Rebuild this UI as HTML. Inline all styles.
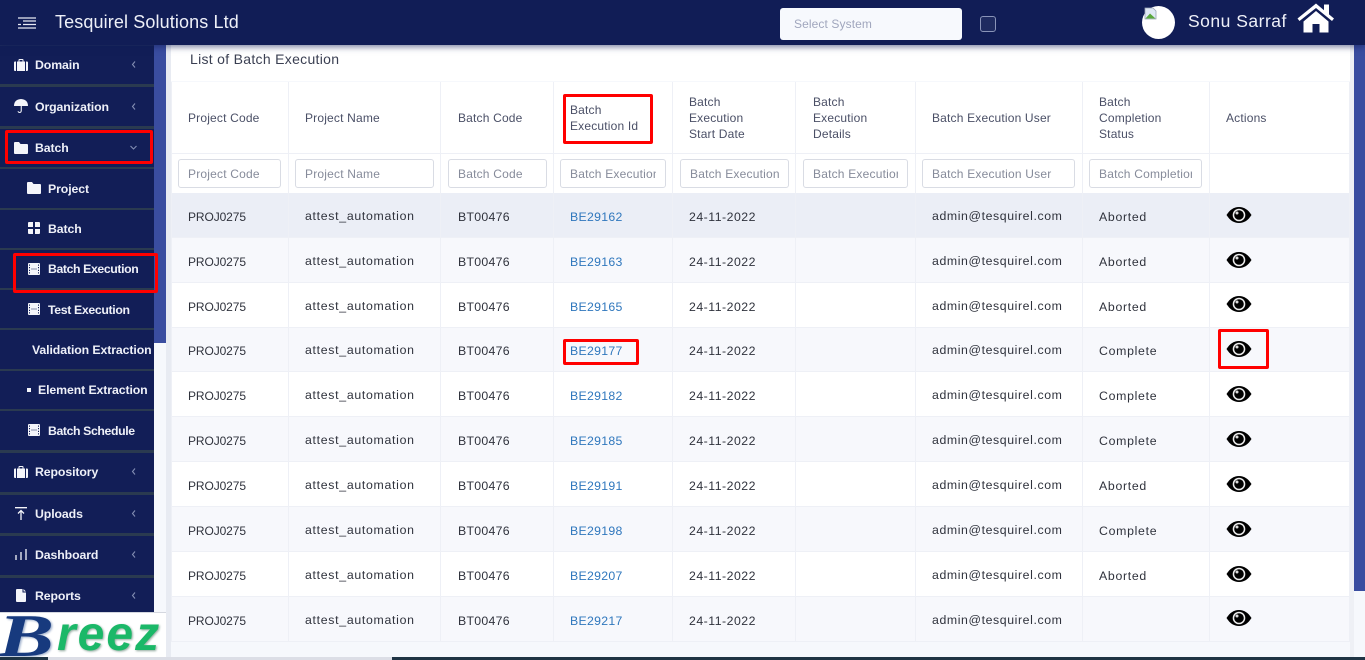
<!DOCTYPE html>
<html><head><meta charset="utf-8"><title>Batch Execution</title>
<style>
html,body{margin:0;padding:0;width:1365px;height:660px;overflow:hidden;background:#f6f8fc;font-family:"Liberation Sans",sans-serif}
div,span,svg,input{position:absolute;box-sizing:border-box}
.top{left:0;top:0;width:1365px;height:45px;background:#111d56;z-index:5;box-shadow:0 2px 6px rgba(17,29,86,.55)}
.side{left:0;top:45px;width:154px;height:568px;background:#121e57;z-index:3}
.dv{left:0;width:154px;height:3px;background:#2a3a50}
.m{color:#eef0f8;font-weight:bold;font-size:12.3px;line-height:16px;white-space:nowrap;letter-spacing:-.1px}
.ch{left:130px;width:7px;height:9px}
.i{fill:#f4f5fa}
.col{background:#eef0f6;width:1px;top:82px;height:560px}
.th{color:#4a4f66;font-size:12px;line-height:16px;white-space:nowrap;letter-spacing:.18px}
.f{top:159px;height:29px;border:1px solid #d9dce4;border-radius:3px;background:#fff;color:#868b9a;font:12px "Liberation Sans",sans-serif;letter-spacing:.2px;padding:0 9px;outline:none}
.f::placeholder{color:#868b9a;opacity:1}
.r{left:171px;width:1179px;height:45px;border-bottom:1px solid #eef0f6}
.alt{background:#f7f8fc}
.r span{top:16px;font-size:12.3px;line-height:16px;color:#2f323c;white-space:nowrap;letter-spacing:.28px}
.r.s span{top:15px}
.r span.c1{left:17px;font-size:12px;letter-spacing:-.1px}
.r span.c2{left:134px;margin-top:-1px;letter-spacing:.7px}
.r span.c3{left:287px}
.r span.c4{left:399px;color:#2f77bd}
.r span.c5{left:518px;letter-spacing:.5px}
.r span.c7{left:761px;margin-top:-1px;letter-spacing:.6px}
.r span.c8{left:928px;letter-spacing:.7px}
.r svg{left:1055px;top:13px;width:26px;height:18px}
.red{border:3px solid #f00;border-radius:2px;z-index:6}
</style></head><body>
<svg width="0" height="0" style="left:0;top:0">
<defs>
<symbol id="eye" viewBox="0 0 26 18"><path d="M0.500 9C4 3.500 8 1 13 1s9 2.500 12.500 8C22 14.500 18 17 13 17S4 14.500 0.500 9z"/><circle cx="13" cy="9" r="6.300" fill="#eee"/><circle cx="13" cy="9" r="4.800"/><circle cx="11" cy="7" r="1.500" fill="#ddd"/></symbol>
<symbol id="film" viewBox="0 0 12 12"><path class="i" fill-rule="evenodd" d="M1 0h10q1 0 1 1v10q0 1-1 1H1q-1 0-1-1V1q0-1 1-1zM1 1.500v1.200h1V1.500zM10 1.500v1.200h1V1.500zM1 4v1.200h1V4zM10 4v1.200h1V4zM1 6.800V8h1V6.800zM10 6.800V8h1V6.800zM1 9.300v1.200h1V9.300zM10 9.300v1.200h1V9.300zM3 5.700v.6h6v-.6z"/></symbol>
<symbol id="case" viewBox="0 0 14 12"><path class="i" d="M0 3.500q0-1 1-1h1V12H1q-1 0-1-1zM3 2.500h1.500V1q0-1 1-1h3q1 0 1 1v1.500H11V12H3zM5.500 1v1.500h3V1zM12 2.500h1q1 0 1 1V11q0 1-1 1h-1z"/></symbol>
<symbol id="fold" viewBox="0 0 14 12"><path class="i" d="M1 0h4l1.500 2H13q1 0 1 1v8q0 1-1 1H1q-1 0-1-1V1q0-1 1-1z"/></symbol>
<symbol id="cv" viewBox="0 0 7 9"><path d="M5 1.500L2.500 4.500 5 7.500" fill="none" stroke="#838eb3" stroke-width="1.100"/></symbol>
</defs></svg>

<div style="left:166px;top:45px;width:5px;height:612px;background:#e8ebf2"></div>
<div style="left:171px;top:45px;width:1179px;height:36px;background:#fff"></div>
<div style="left:171px;top:82px;width:1179px;height:111px;background:#fff"></div>
<div style="left:171px;top:153px;width:1179px;height:1px;background:#eef0f6"></div>
<div style="left:1350px;top:45px;width:4px;height:612px;background:#eef0f5"></div>
<div style="left:154px;top:45px;width:12px;height:298px;background:#3a4da0"></div>
<div style="left:1354px;top:45px;width:11px;height:546px;background:#3a4da0"></div>
<div style="left:190px;top:50px;font-size:14px;line-height:18px;color:#3a3f52;letter-spacing:.3px;white-space:nowrap">List of Batch Execution</div>

<div class="r" style="top:193px;background:#ebeef6"><span class="c1">PROJ0275</span><span class="c2">attest_automation</span><span class="c3">BT00476</span><span class="c4">BE29162</span><span class="c5">24-11-2022</span><span class="c7">admin@tesquirel.com</span><span class="c8">Aborted</span><svg><use href="#eye"/></svg></div>
<div class="r alt" style="top:238px"><span class="c1">PROJ0275</span><span class="c2">attest_automation</span><span class="c3">BT00476</span><span class="c4">BE29163</span><span class="c5">24-11-2022</span><span class="c7">admin@tesquirel.com</span><span class="c8">Aborted</span><svg><use href="#eye"/></svg></div>
<div class="r" style="top:283px;background:#fff"><span class="c1">PROJ0275</span><span class="c2">attest_automation</span><span class="c3">BT00476</span><span class="c4">BE29165</span><span class="c5">24-11-2022</span><span class="c7">admin@tesquirel.com</span><span class="c8">Aborted</span><svg style="top:12px"><use href="#eye"/></svg></div>
<div class="r alt s" style="top:328px;height:44px"><span class="c1">PROJ0275</span><span class="c2">attest_automation</span><span class="c3">BT00476</span><span class="c4">BE29177</span><span class="c5">24-11-2022</span><span class="c7">admin@tesquirel.com</span><span class="c8">Complete</span><svg style="top:12px"><use href="#eye"/></svg></div>
<div class="r" style="top:372px;background:#fff"><span class="c1">PROJ0275</span><span class="c2">attest_automation</span><span class="c3">BT00476</span><span class="c4">BE29182</span><span class="c5">24-11-2022</span><span class="c7">admin@tesquirel.com</span><span class="c8">Complete</span><svg><use href="#eye"/></svg></div>
<div class="r alt" style="top:417px"><span class="c1">PROJ0275</span><span class="c2">attest_automation</span><span class="c3">BT00476</span><span class="c4">BE29185</span><span class="c5">24-11-2022</span><span class="c7">admin@tesquirel.com</span><span class="c8">Complete</span><svg><use href="#eye"/></svg></div>
<div class="r" style="top:462px;background:#fff"><span class="c1">PROJ0275</span><span class="c2">attest_automation</span><span class="c3">BT00476</span><span class="c4">BE29191</span><span class="c5">24-11-2022</span><span class="c7">admin@tesquirel.com</span><span class="c8">Aborted</span><svg><use href="#eye"/></svg></div>
<div class="r alt" style="top:507px"><span class="c1">PROJ0275</span><span class="c2">attest_automation</span><span class="c3">BT00476</span><span class="c4">BE29198</span><span class="c5">24-11-2022</span><span class="c7">admin@tesquirel.com</span><span class="c8">Complete</span><svg><use href="#eye"/></svg></div>
<div class="r" style="top:552px;background:#fff"><span class="c1">PROJ0275</span><span class="c2">attest_automation</span><span class="c3">BT00476</span><span class="c4">BE29207</span><span class="c5">24-11-2022</span><span class="c7">admin@tesquirel.com</span><span class="c8">Aborted</span><svg><use href="#eye"/></svg></div>
<div class="r alt" style="top:597px"><span class="c1">PROJ0275</span><span class="c2">attest_automation</span><span class="c3">BT00476</span><span class="c4">BE29217</span><span class="c5">24-11-2022</span><span class="c7">admin@tesquirel.com</span><svg style="top:12px"><use href="#eye"/></svg></div>

<div class="col" style="left:171px"></div><div class="col" style="left:288px"></div><div class="col" style="left:440px"></div><div class="col" style="left:553px"></div><div class="col" style="left:672px"></div><div class="col" style="left:795px"></div><div class="col" style="left:915px"></div><div class="col" style="left:1082px"></div><div class="col" style="left:1209px"></div><div class="col" style="left:1349px"></div>

<div class="th" style="left:188px;top:110px">Project Code</div>
<div class="th" style="left:305px;top:110px">Project Name</div>
<div class="th" style="left:458px;top:110px">Batch Code</div>
<div class="th" style="left:570px;top:102px">Batch<br>Execution Id</div>
<div class="th" style="left:689px;top:94px">Batch<br>Execution<br>Start Date</div>
<div class="th" style="left:813px;top:94px">Batch<br>Execution<br>Details</div>
<div class="th" style="left:932px;top:110px">Batch Execution User</div>
<div class="th" style="left:1099px;top:94px">Batch<br>Completion<br>Status</div>
<div class="th" style="left:1226px;top:110px">Actions</div>

<input class="f" style="left:178px;width:103px" placeholder="Project Code">
<input class="f" style="left:295px;width:139px" placeholder="Project Name">
<input class="f" style="left:448px;width:99px" placeholder="Batch Code">
<input class="f" style="left:560px;width:106px" placeholder="Batch Execution Id">
<input class="f" style="left:680px;width:109px" placeholder="Batch Execution Start Date">
<input class="f" style="left:803px;width:105px" placeholder="Batch Execution Details">
<input class="f" style="left:922px;width:153px" placeholder="Batch Execution User">
<input class="f" style="left:1089px;width:113px" placeholder="Batch Completion Status">

<div class="top">
<svg style="left:18px;top:17px;width:18px;height:12px" viewBox="0 0 18 12"><path d="M0 1h18M5 4h13M0 7.500h3M5 7.500h13M0 11h18" stroke="#e8eaf4" stroke-width="1.300" fill="none"/></svg>
<div style="left:55px;top:11px;font-size:18px;line-height:22px;color:#eef0f8;white-space:nowrap;letter-spacing:.12px">Tesquirel Solutions Ltd</div>
<div style="left:780px;top:8px;width:182px;height:32px;background:#f7f9fd;border-radius:3px"></div>
<div style="left:794px;top:16px;font-size:12px;line-height:16px;color:#a0a6bd;white-space:nowrap;letter-spacing:.1px">Select System</div>
<div style="left:980px;top:16px;width:16px;height:16px;border:1px solid #8a94b8;border-radius:3px;background:#1f2b60"></div>
<div style="left:1142px;top:6px;width:33px;height:33px;border-radius:50%;background:#fff"></div>
<svg style="left:1144px;top:7px;width:13px;height:13px" viewBox="0 0 13 13"><path d="M1 1h8l3 3v8H1z" fill="#dfe8f5" stroke="#9aa5b5" stroke-width=".8"/><path d="M1.500 11.500L6 6.500l5.500 5z" fill="#5aa83c"/></svg>
<div style="left:1188px;top:10px;font-size:17.500px;line-height:22px;color:#eef0f8;white-space:nowrap;letter-spacing:.5px">Sonu Sarraf</div>
<svg style="left:1297px;top:3px;width:38px;height:30px" viewBox="0 0 38 30"><path fill="#fff" d="M19 0.500L0.500 15.500l2 2.500L19 5l16 13 2-2.500-5-4.100V1.500h-5v5.800zM6.500 18.500V29.500h9V21h7v8.500h9V18.500L19 8z"/></svg>
</div>

<div class="side" style="top:45px">
<div style="left:0;top:0;width:154px;height:1px;background:#1d2a5c"></div>
<div class="dv" style="top:39px"></div><div class="dv" style="top:81px"></div><div class="dv" style="top:122px;height:2px"></div><div class="dv" style="top:163px;height:2px"></div><div class="dv" style="top:203px;height:2px"></div><div class="dv" style="top:243px;height:2px"></div><div class="dv" style="top:283px;height:2px"></div><div class="dv" style="top:324px;height:2px"></div><div class="dv" style="top:364px;height:2px"></div><div class="dv" style="top:405px"></div><div class="dv" style="top:447px"></div><div class="dv" style="top:488px"></div><div class="dv" style="top:530px"></div>
</div>

<div style="left:0;top:0;width:154px;height:613px;z-index:4">
<svg style="left:14px;top:59px;width:14px;height:12px"><use href="#case"/></svg>
<div class="m" style="left:35px;top:57px">Domain</div>
<svg class="ch" style="top:60px"><use href="#cv"/></svg>

<svg style="left:14px;top:99px;width:14px;height:14px" viewBox="0 0 14 14"><path class="i" d="M7 0Q14 0.500 14 7H7.800V11.500Q7.800 14 5.500 14Q4 14 3.500 12.300h1Q5 13 5.600 13 6.700 13 6.700 11.500V7H0Q0 0.500 7 0z"/></svg>
<div class="m" style="left:35px;top:99px">Organization</div>
<svg class="ch" style="top:102px"><use href="#cv"/></svg>

<svg style="left:14px;top:142px;width:14px;height:12px"><use href="#fold"/></svg>
<div class="m" style="left:35px;top:140px">Batch</div>
<svg style="left:129px;top:144px;width:9px;height:7px" viewBox="0 0 9 7"><path d="M1.500 2l3 3 3-3" fill="none" stroke="#838eb3" stroke-width="1.100"/></svg>

<svg style="left:27px;top:182px;width:14px;height:12px"><use href="#fold"/></svg>
<div class="m" style="left:48px;top:181px">Project</div>

<svg style="left:28px;top:222px;width:12px;height:12px" viewBox="0 0 12 12"><path class="i" d="M0 1q0-1 1-1h4v5H0zM7 0h4q1 0 1 1v4H7zM0 7h5v5H1q-1 0-1-1zM7 7h5v4q0 1-1 1H7z"/></svg>
<div class="m" style="left:48px;top:221px">Batch</div>

<svg style="left:28px;top:263px;width:12px;height:12px"><use href="#film"/></svg>
<div class="m" style="left:48px;top:261px;letter-spacing:-.4px">Batch Execution</div>

<svg style="left:28px;top:303px;width:12px;height:12px"><use href="#film"/></svg>
<div class="m" style="left:48px;top:302px;letter-spacing:-.35px">Test Execution</div>

<div class="m" style="left:32px;top:342px">Validation Extraction</div>

<div style="left:27px;top:388px;width:4px;height:4px;background:#f4f5fa"></div>
<div class="m" style="left:38px;top:382px">Element Extraction</div>

<svg style="left:28px;top:424px;width:12px;height:12px"><use href="#film"/></svg>
<div class="m" style="left:48px;top:423px;letter-spacing:-.4px">Batch Schedule</div>

<svg style="left:14px;top:466px;width:14px;height:12px"><use href="#case"/></svg>
<div class="m" style="left:35px;top:464px">Repository</div>
<svg class="ch" style="top:467px"><use href="#cv"/></svg>

<svg style="left:15px;top:507px;width:12px;height:13px" viewBox="0 0 12 13"><path d="M0 .7h12M6 13V4M3 6.500L6 3.500l3 3" fill="none" stroke="#f4f5fa" stroke-width="1.300"/></svg>
<div class="m" style="left:35px;top:506px">Uploads</div>
<svg class="ch" style="top:509px"><use href="#cv"/></svg>

<svg style="left:15px;top:549px;width:12px;height:11px" viewBox="0 0 12 11"><path d="M1 11V6M6 11V3M11 11V0" fill="none" stroke="#f4f5fa" stroke-width="1.300"/></svg>
<div class="m" style="left:35px;top:547px">Dashboard</div>
<svg class="ch" style="top:550px"><use href="#cv"/></svg>

<svg style="left:16px;top:589px;width:10px;height:13px" viewBox="0 0 10 13"><path class="i" d="M1 0h5.500v3.500H10V12q0 1-1 1H1q-1 0-1-1V1q0-1 1-1zM7.500 0L10 2.500H7.500z"/></svg>
<div class="m" style="left:35px;top:588px">Reports</div>
<svg class="ch" style="top:591px"><use href="#cv"/></svg>
</div>

<div style="left:0;top:612px;width:166px;height:45px;background:#fff;border-top:1px solid #d4d7df;z-index:5;overflow:hidden">
<div style="left:-2px;top:-7px;font:italic bold 60px/60px 'Liberation Serif',serif;color:#173a7e;white-space:nowrap;transform:scaleX(1.400);transform-origin:0 0;text-shadow:1px 1px 2px #9fb0cc">B</div>
<div style="left:57px;top:-2px;font:italic bold 48px/48px 'Liberation Sans',sans-serif;color:#1bb868;white-space:nowrap;letter-spacing:2px;text-shadow:1px 1px 2px #8fa89c">reez</div>
</div>

<div style="left:0;top:657px;width:1365px;height:3px;background:#dcdee6;z-index:5"></div>
<div style="left:0;top:657px;width:48px;height:3px;background:#1f3444;z-index:6"></div>
<div style="left:392px;top:657px;width:973px;height:3px;background:#1f3444;z-index:6"></div>

<div class="red" style="left:5px;top:130px;width:148px;height:34px"></div>
<div class="red" style="left:13px;top:253px;width:145px;height:40px"></div>
<div class="red" style="left:563px;top:94px;width:90px;height:50px"></div>
<div class="red" style="left:563px;top:339px;width:76px;height:26px"></div>
<div class="red" style="left:1218px;top:329px;width:51px;height:40px"></div>
</body></html>
